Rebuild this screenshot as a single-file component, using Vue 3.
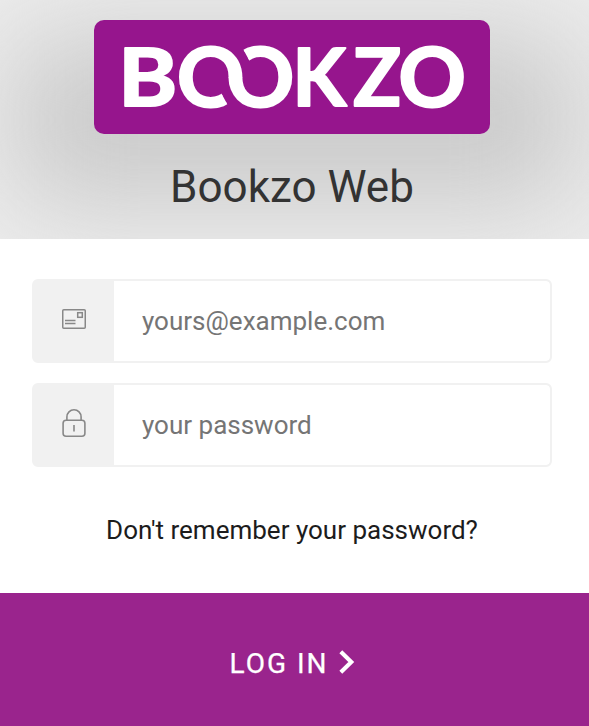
<template>
  <div class="lock">
    <!-- Header -->
    <header class="header">
      <div class="header-bg"></div>
      <div class="header-inner">
        <svg class="logo" width="396" height="114" viewBox="0 0 396 114" role="img" aria-label="Bookzo">
          <defs>
            <!-- open the two middle letters where they link together -->
            <clipPath id="open-right">
              <path d="M70 10H150V57.500H122L127.700 74L134.500 86.500L128 110H70Z" />
            </clipPath>
            <clipPath id="open-left">
              <path d="M130 110V57H161L155.300 40.500L148.500 28L155 8H210V110Z" />
            </clipPath>
          </defs>
          <rect width="396" height="114" rx="10" fill="#96158d" />
          <g class="word">
            <text transform="translate(24.300 86.200) scale(1.110 1)">B</text>
            <g clip-path="url(#open-right)"><text transform="translate(83.100 86.500) scale(1.035 1.020)">O</text></g>
            <g clip-path="url(#open-left)"><text transform="translate(132.500 86.500) scale(1.040 1.020)">O</text></g>
            <text transform="translate(198.400 86.200) scale(.970 1)">K</text>
            <text transform="translate(259.300 86.200) scale(.980 1)">Z</text>
            <text transform="translate(304.500 86.500) scale(1.035 1.020)">O</text>
          </g>
        </svg>
        <h1 class="title">Bookzo Web</h1>
      </div>
    </header>

    <!-- Form -->
    <form class="form" @submit.prevent="logIn">
      <div class="fields">
        <label class="field">
          <span class="field-icon">
            <svg class="icon-mail" width="24" height="20" viewBox="0 0 24 20" fill="none" stroke="#888">
              <rect x=".75" y=".75" width="22.500" height="18.500" rx="1" stroke-width="1.500" />
              <rect x="15.700" y="3.700" width="4.600" height="4.600" stroke-width="1.500" />
              <path d="M3 11.500H13.500M3 14.500H13.500" stroke-width="1.400" />
            </svg>
          </span>
          <input v-model="form.email" class="input" type="email" placeholder="yours@example.com" />
        </label>
        <label class="field">
          <span class="field-icon">
            <svg class="icon-lock" width="24" height="29" viewBox="0 0 24 29" fill="none" stroke="#888" stroke-width="1.600">
              <rect x="1.100" y="11.300" width="21.800" height="16" rx="3" />
              <path d="M4.900 11.300V7.900a7.100 7.100 0 0 1 14.200 0V11.300M12 16V22.500" />
            </svg>
          </span>
          <input v-model="form.password" class="input" type="password" placeholder="your password" />
        </label>
      </div>
      <a class="forgot" href="#" @click.prevent>Don't remember your password?</a>
      <button class="submit" type="submit">
        <span>LOG IN</span>
        <svg class="chevron" width="16" height="24" viewBox="0 0 16 24" fill="none" stroke="#fff" stroke-width="4.100">
          <path d="M1.800 1.800L12.300 12L1.800 22.200" />
        </svg>
      </button>
    </form>
  </div>
</template>

<script setup>
import { reactive } from 'vue'

const form = reactive({ email: '', password: '' })

function logIn() {
  form.password = ''
}
</script>

<style>
body{margin:0;background:#fff}
</style>

<style scoped>
.lock{width:100%;height:726px;overflow:hidden;display:flex;flex-direction:column;font-family:Roboto,"Liberation Sans",sans-serif}
.header{position:relative;height:239px;overflow:hidden;background:#ededed}
.header-bg{position:absolute;left:10px;top:36px;width:569px;height:168px;border-radius:24px;background:#cacaca;filter:blur(54px)}
.header-inner{position:relative;width:584px;padding-top:20px;display:flex;flex-direction:column;align-items:center}
.logo{display:block}
.word text{font-family:Lato,sans-serif;font-weight:700;font-size:80.6px;fill:#fff;stroke:#fff;stroke-width:2.2px;stroke-linejoin:round}
.title{margin:27px 0 0;font-size:44px;line-height:52px;font-weight:400;color:#333}
.form{flex:1;display:flex;flex-direction:column}
.fields{width:520px;margin:40px 0 0 32px;display:flex;flex-direction:column;gap:20px}
.field{box-sizing:border-box;height:84px;display:flex;border:2px solid #f1f1f1;border-radius:6px;background:#f1f1f1;overflow:hidden}
.field-icon{width:80px;display:flex;justify-content:center}
.icon-mail{margin-top:28px}
.icon-lock{margin-top:24px}
.input{flex:1;min-width:0;border:0;outline:0;padding:0 28px;border-radius:0 4px 4px 0;background:#fff;font:400 26px Roboto,sans-serif;color:#333}
.input::placeholder{color:#757575;opacity:1}
.forgot{width:584px;margin-top:47px;font-size:26px;line-height:32px;text-align:center;text-decoration:none;color:#1c1c1c}
.submit{margin-top:auto;height:133px;border:0;padding:8px 5px 0 0;display:flex;align-items:center;justify-content:center;gap:10px;background:#9a248d;color:#fff;font:400 28px Roboto,sans-serif;letter-spacing:2px;-webkit-text-stroke:.25px #fff}
.chevron{margin-top:-4px}
</style>
